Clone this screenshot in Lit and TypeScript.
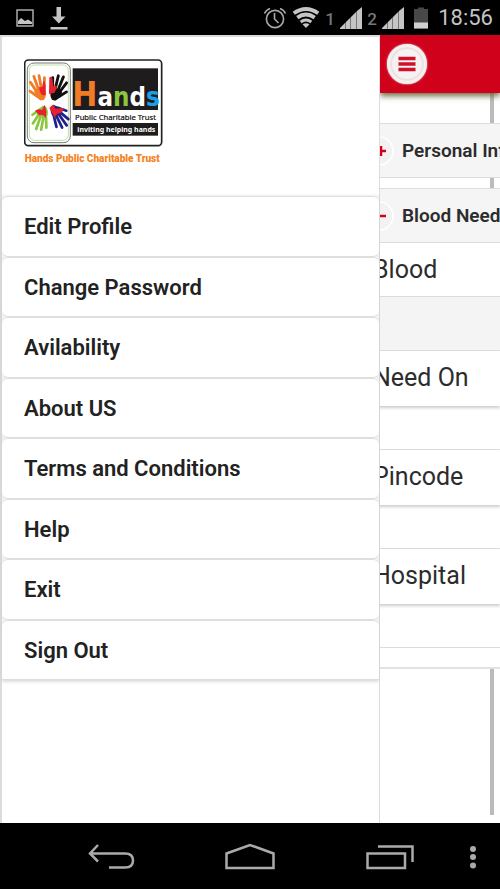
import { LitElement, html, svg, css } from "lit";
import { customElement } from "lit/decorators.js";

const MENU = [
  "Edit Profile",
  "Change Password",
  "Avilability",
  "About US",
  "Terms and Conditions",
  "Help",
  "Exit",
  "Sign Out",
];

const signal = svg`
  <path d="M0 22V21L5 16V22ZM6 22V15L10 11V22ZM11 22V10L16 5V22ZM17 22V4L22 0V22Z" fill="#c4c4c4"/>
  <path d="M5 22V16L6 15V22ZM10 22V11L11 10V22ZM16 22V5L17 4V22Z" fill="#777"/>`;

@customElement("status-bar")
class StatusBar extends LitElement {
  static styles = css`
    :host {
      display: flex;
      align-items: center;
      height: 35px;
      padding: 0 7px 0 16px;
      background: #000;
      color: #c4c4c4;
      font: 400 22px/35px Roboto, sans-serif;
    }
    svg { display: block; flex: none; }
    .left { display: flex; align-items: center; gap: 16px; flex: 1; }
    .right { display: flex; align-items: center; gap: 5px; }
    .sim { color: #777; font-size: 17px; font-weight: 500; width: 10px; padding-top: 4px; }
    .battery { margin: 0 4px; }
  `;
  render() {
    return html`
      <div class="left">
        <svg width="18" height="18" viewBox="0 0 18 18" aria-label="Picture">
          <path d="M1 1H17V17H1Z" fill="none" stroke="#aaa" stroke-width="1.5"/>
          <path d="M2 15V12L5 9L9 12L12 10.5L16 13V15Z" fill="#c4c4c4"/>
        </svg>
        <svg width="18" height="24" viewBox="0 0 18 24" aria-label="Download">
          <path d="M6.500 1H11V10.500H15.500L8.800 17.500L2 10.500H6.500Z" fill="#c4c4c4"/>
          <path d="M0.500 21H17.500V23.500H0.500Z" fill="#c4c4c4"/>
        </svg>
      </div>
      <div class="right">
        <svg width="24" height="22" viewBox="0 0 24 22" fill="none" stroke="#aaa" stroke-width="1.600" aria-label="Alarm">
          <circle cx="12" cy="12" r="8.600"/>
          <path d="M11.500 6V12L15.500 16"/>
          <path d="M1.500 6.500Q3 3 7 1.500M22.500 6.500Q21 3 17 1.500"/>
        </svg>
        <svg width="28" height="22" viewBox="0 0 28 22" fill="none" stroke="#c4c4c4" stroke-width="3.800" aria-label="Wi-Fi">
          <path d="M1.800 6.200Q14 -2.200 26.200 6.200"/>
          <path d="M5.300 10.600Q14 4.400 22.700 10.600"/>
          <path d="M8.700 15Q14 11 19.300 15" stroke-width="3"/>
          <path d="M14 21L10.500 17.200Q14 15.200 17.500 17.200Z" fill="#c4c4c4" stroke="none"/>
        </svg>
        <span class="sim">1</span>
        <svg width="22" height="22" viewBox="0 0 22 22">${signal}</svg>
        <span class="sim">2</span>
        <svg width="22" height="22" viewBox="0 0 22 22">${signal}</svg>
        <svg class="battery" width="16" height="22" viewBox="0 0 16 22" aria-label="Battery">
          <path d="M1 2H5V0.500H11V2H15V21.500H1Z" fill="#484848"/>
          <path d="M1 15.500H15V21.500H1Z" fill="#d0d0d0"/>
        </svg>
        <span>18:56</span>
      </div>
    `;
  }
}

@customElement("trust-logo")
class TrustLogo extends LitElement {
  static styles = css`
    :host { display: block; }
    svg { display: block; }
    .name { font-family: "DejaVu Sans Condensed", "DejaVu Sans", sans-serif; font-weight: 700; }
    .caption { font-family: Roboto, sans-serif; font-weight: 900; }
    .tag { font-family: "Noto Sans", sans-serif; }
    .bold { font-weight: 700; }
  `;
  render() {
    // One open hand, fingers up, wrist at the origin.
    const hand = (color: string, place: string) => svg`
      <g transform=${place} fill="none" stroke=${color} stroke-width="6.500" stroke-linecap="round">
        <path d="M-13 -27Q-16 -14 -4 -2H4Q15 -12 12 -30Z" fill=${color} stroke="none"/>
        <path d="M-9 -27L-17 -49M-3 -28L-6 -60M4 -28L6 -59M10 -27L17 -51"/>
        <path d="M-9 -13L-23 -29"/>
      </g>`;
    return html`
      <svg width="139" height="108" viewBox="42 27 417 324" role="img" aria-label="Hands Public Charitable Trust">
        <rect x="44" y="30" width="411" height="257" rx="11" fill="#fff" stroke="#222" stroke-width="5"/>
        <rect x="52" y="39" width="129" height="239" rx="20" fill="#fff" stroke="#777" stroke-width="3"/>
        <rect x="58" y="45" width="117" height="226" rx="16" fill="#fff" stroke="#bfe0a0" stroke-width="3"/>
        ${hand("#f07c28", "translate(98 153) rotate(-14) scale(1.300)")}
        ${hand("#111", "translate(130 153) rotate(17) scale(-1.300 1.300)")}
        ${hand("#8cc63f", "translate(104 166) rotate(194) scale(-1.250 1.250)")}
        ${hand("#20208c", "translate(126 165) rotate(150) scale(1.250)")}
        <path d="M87 110Q98 116 98 104Q102 78 107 108V134Q90 142 87 110Z" fill="#e8202c"/>
        <path d="M118 82Q128 76 128 94L130 108Q136 104 141 110L134 128L117 132Z" fill="#e8202c"/>
        <path d="M75 182Q86 174 96 180L104 164L109 184L108 204Q98 190 88 196Z" fill="#e8202c"/>
        <path d="M118 174L130 163L136 176L160 174Q162 184 150 190Q138 190 134 204Z" fill="#e8202c"/>
        <rect x="188" y="55" width="256" height="125" fill="#1e1c1d"/>
        <rect x="188" y="219" width="256" height="38" fill="#1e1c1d"/>
        <text class="name" x="187" y="167" font-size="77"><tspan fill="#f07c28" font-size="100">H</tspan><tspan fill="#fff">a</tspan><tspan fill="#8cc63f">n</tspan><tspan fill="#fff">d</tspan><tspan fill="#1ba0e8">s</tspan></text>
        <text class="tag" x="195" y="209" font-size="23" fill="#111" stroke="#111" stroke-width="0.600">Public Charitable Trust</text>
        <text class="tag bold" x="202" y="245" font-size="21" fill="#fff">inviting helping hands</text>
        <text class="caption" x="44" y="337" font-size="30" fill="#f58220">Hands Public Charitable Trust</text>
      </svg>
    `;
  }
}

@customElement("side-drawer")
class SideDrawer extends LitElement {
  static styles = css`
    :host {
      display: block;
      box-sizing: border-box;
      background: #fff;
      border: solid #dcdcdc;
      border-width: 2px 1px 0 2px;
      font-family: Roboto, sans-serif;
    }
    .brand { height: 159px; padding: 22px 22px 0; box-sizing: border-box; }
    .menu {
      list-style: none;
      margin: 0;
      padding: 0;
      display: grid;
      grid-auto-rows: 1fr;
      height: 484px;
      background: #f2f2f2;
      box-shadow: 0 1px 4px #ccc;
    }
    .item {
      display: flex;
      align-items: center;
      padding: 2px 22px 0;
      background: #fff;
      border-radius: 6px;
      border: solid #dedede;
      border-width: 1px 0;
      color: #222;
      font-size: 22px;
      font-weight: 600;
      line-height: 28px;
      text-decoration: none;
    }
    .row { display: grid; }
    .row:last-child .item { border-radius: 6px 6px 0 0; }
  `;
  render() {
    return html`
      <div class="brand"><trust-logo></trust-logo></div>
      <ul class="menu">
        ${MENU.map((m) => html`<li class="row"><a class="item" href="#">${m}</a></li>`)}
      </ul>
    `;
  }
}

@customElement("request-page")
class RequestPage extends LitElement {
  static styles = css`
    :host {
      display: block;
      overflow: hidden;
      background: #fff;
      color: #2c2c2c;
      font-family: Roboto, sans-serif;
      white-space: nowrap;
    }
    .header {
      display: flex;
      align-items: center;
      position: relative;
      height: 58px;
      padding-left: 7px;
      background: #d0021b;
      box-shadow: 0 3px 6px #6c6c40;
    }
    .burger {
      width: 40px;
      height: 40px;
      padding: 0;
      border: 3px solid #f4f0f0;
      border-radius: 50%;
      background: #f4f2f2;
      box-shadow: inset 0 0 0 2px #f0dfe0, 0 0 2px #eee;
      display: grid;
      place-items: center;
    }
    .slid { margin-left: -20px; }
    .track { margin-right: 6px; border-right: 4px solid #bbb; }
    .top { height: 30px; }
    .between { height: 10px; }
    .rest { height: 146px; }
    .section {
      box-sizing: border-box;
      display: flex;
      align-items: center;
      gap: 8px;
      width: 100%;
      height: 55px;
      padding: 0 0 0 10px;
      overflow: hidden;
      background: #f5f5f5;
      border: solid #dcdcdc;
      border-width: 1px 0;
      color: #2c2c2c;
      font: 600 19px/24px Roboto, sans-serif;
      white-space: nowrap;
    }
    .section svg { flex: none; }
    .label, .value {
      box-sizing: border-box;
      display: block;
      width: 100%;
      border: 0;
      border-radius: 0;
      background: #fff;
    }
    .label {
      height: 55px;
      padding-left: 13px;
      font-size: 25px;
      line-height: 54px;
    }
    .line { height: 54px; border-bottom: 1px solid #dcdcdc; }
    .shade { position: relative; box-shadow: 0 2px 3px #ccc; }
    .select { height: 54px; appearance: none; background: #f4f4f4; }
    .value { border-bottom: 1px solid #dcdcdc; }
    .input { height: 44px; }
    .foot { height: 19px; border-bottom: 2px solid #e2e2e2; }
  `;
  render() {
    const toggle = (open: boolean) => svg`
      <circle cx="9" cy="15" r="14" fill="#f2f2f2" stroke="#fff" stroke-width="1.500"/>
      <path d=${open ? "M6 15H16" : "M6 15H16M11 10V20"} stroke="#d0021b" stroke-width="2.500"/>`;
    return html`
      <div class="header">
        <button class="burger" aria-label="Menu">
          <svg width="18" height="16" viewBox="0 0 18 16">
            <path d="M0.500 2.500H17.500M0.500 8H17.500M0.500 13.500H17.500" stroke="#d0102a" stroke-width="3.500"/>
          </svg>
        </button>
      </div>
      <div class="slid">
        <div class="track top"></div>
        <button class="section">
          <svg width="24" height="30" viewBox="0 0 24 30" overflow="visible">${toggle(false)}</svg>Personal Info
        </button>
        <div class="track between"></div>
        <button class="section">
          <svg width="24" height="30" viewBox="0 0 24 30" overflow="visible">${toggle(true)}</svg>Blood Needed
        </button>
        <label class="label line" for="blood">Blood</label>
        <select class="value select shade" id="blood"></select>
        <label class="label shade" for="need">Need On</label>
        <input class="value input" id="need" />
        <label class="label shade" for="pin">Pincode</label>
        <input class="value input" id="pin" />
        <label class="label shade" for="hospital">Hospital</label>
        <input class="value input" id="hospital" />
        <div class="foot"></div>
        <div class="track rest"></div>
      </div>
    `;
  }
}

@customElement("nav-bar")
class NavBar extends LitElement {
  static styles = css`
    :host {
      display: grid;
      grid-template-columns: 1fr 1fr 1fr 26px;
      height: 66px;
      padding: 0 14px 0 41px;
      background: #000;
    }
    button {
      display: grid;
      place-items: center;
      padding: 2px 0 0;
      border: 0;
      background: none;
    }
    svg { fill: none; stroke: #aaa; stroke-width: 2.500px; }
    .dots { fill: #aaa; stroke: none; }
  `;
  render() {
    return html`
      <button aria-label="Back">
        <svg width="48" height="28" viewBox="0 0 48 28"><path d="M11 2L3 10.500L11 18.500M3 10.500H38Q46 10.500 46 17.500Q46 24.500 38 24.500H22"/></svg>
      </button>
      <button aria-label="Home">
        <svg width="50" height="28" viewBox="0 0 50 28"><path d="M1.500 25V10.500L25 2L48.500 10.500V25Z"/></svg>
      </button>
      <button aria-label="Recent apps">
        <svg width="48" height="26" viewBox="0 0 48 26"><path d="M1.500 9.500H39V24H1.500ZM12 2.500H46.500V18"/></svg>
      </button>
      <button aria-label="More">
        <svg class="dots" width="8" height="24" viewBox="0 0 8 24"><circle cx="4" cy="4" r="3"/><circle cx="4" cy="12" r="3"/><circle cx="4" cy="20.500" r="3"/></svg>
      </button>
    `;
  }
}

@customElement("app-root")
class AppRoot extends LitElement {
  static styles = css`
    :host {
      display: flex;
      flex-direction: column;
      min-height: 100vh;
      background: #fff;
    }
    .stage { flex: 1; display: grid; grid-template-columns: 76fr 24fr; }
    .stage > * { min-width: 0; }
  `;
  render() {
    return html`
      <status-bar></status-bar>
      <main class="stage">
        <side-drawer></side-drawer>
        <request-page></request-page>
      </main>
      <nav-bar></nav-bar>
    `;
  }
}
